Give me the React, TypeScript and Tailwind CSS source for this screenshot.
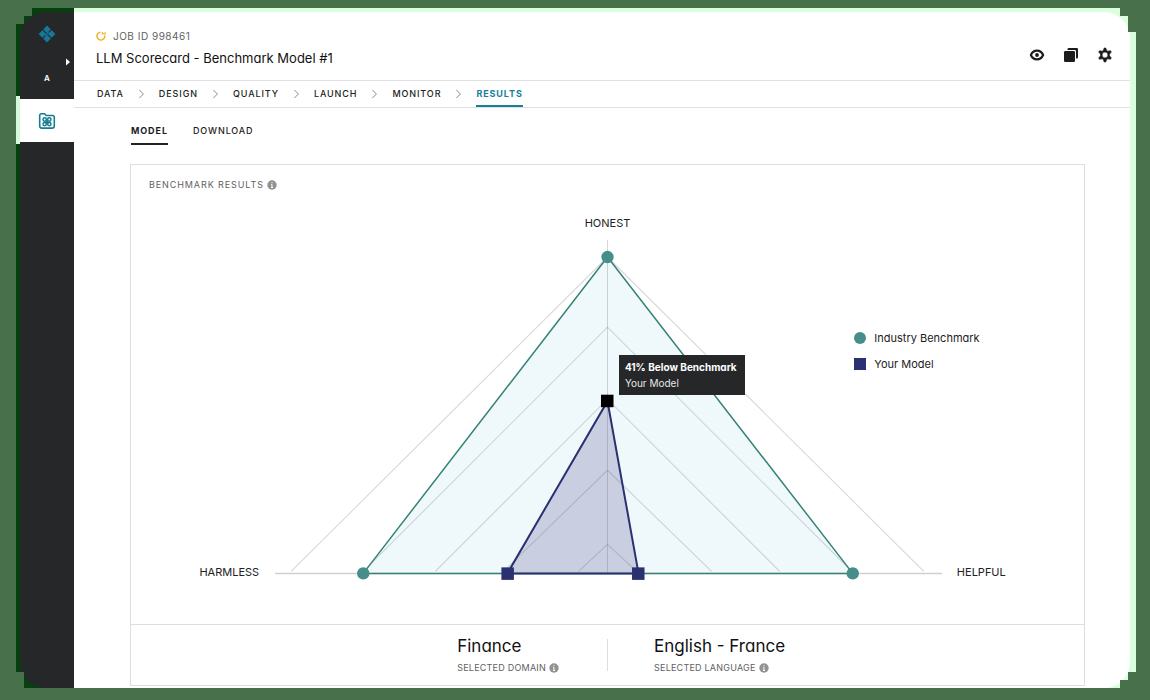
import type { ReactNode } from "react";

const steps = ["DATA", "DESIGN", "QUALITY", "LAUNCH", "MONITOR", "RESULTS"];

/* Half base width and peak height of each level of the radar grid. */
const gridLevels = [
  { half: 316, peak: 316 },
  { half: 244, peak: 246 },
  { half: 172, peak: 174 },
  { half: 104, peak: 103 },
  { half: 29, peak: 29 },
];

function LogoIcon() {
  return (
    <svg width="18" height="18" viewBox="0 0 18 18" aria-hidden="true">
      <g fill="#17789a">
        <path d="M9 0.6 12.8 4.4 9 8.2 5.2 4.4Z" />
        <path d="M4.4 5.2 8.2 9 4.4 12.8 0.6 9Z" />
        <path d="M13.6 5.2 17.4 9 13.6 12.8 9.8 9Z" />
        <path d="M9 9.8 12.8 13.6 9 17.4 5.2 13.6Z" />
      </g>
      <path d="M7.4 10.6 10.6 7.4" stroke="#17789a" strokeWidth="1.2" />
    </svg>
  );
}

function ProjectsIcon() {
  return (
    <svg width="18" height="18" viewBox="0 0 18 18" fill="none" stroke="#147d91" aria-hidden="true">
      <path
        d="M1.7 3.4A1.6 1.6 0 0 1 3.3 1.8h3.2l1.7 1.7h6.5a1.6 1.6 0 0 1 1.6 1.6v9a2 2 0 0 1-2 2H3.7a2 2 0 0 1-2-2Z"
        strokeWidth="1.6"
        strokeLinejoin="round"
      />
      <g strokeWidth="1.5">
        <circle cx="6.7" cy="7.5" r="1.7" />
        <circle cx="11.3" cy="7.5" r="1.7" />
        <circle cx="6.7" cy="12.1" r="1.7" />
        <circle cx="11.3" cy="12.1" r="1.7" />
        <path d="m7.9 8.7 2.2 2.2M10.1 8.7l-2.2 2.2" />
      </g>
    </svg>
  );
}

function StatusIcon() {
  return (
    <svg width="10" height="10" viewBox="0 0 10 10" fill="none" stroke="#f5b52e" strokeWidth="1.6" aria-hidden="true">
      <path d="M4.6 1.2A3.9 3.9 0 1 0 8.7 4.3" />
      <path d="M6.4 3.4V.9M6.4 2.8H9.2V1.2" strokeWidth="1.2" />
    </svg>
  );
}

function EyeIcon() {
  return (
    <svg width="16" height="16" viewBox="0 0 16 16" aria-hidden="true">
      <path
        d="M1.9 8C3.2 5 5.4 3.6 8 3.6S12.8 5 14.1 8c-1.3 3-3.5 4.4-6.1 4.4S3.2 11 1.9 8Z"
        fill="none"
        stroke="#1b1c1d"
        strokeWidth="2.2"
        strokeLinejoin="round"
      />
      <circle cx="8" cy="8" r="1.9" fill="#1b1c1d" />
    </svg>
  );
}

function CopyIcon() {
  return (
    <svg width="16" height="16" viewBox="0 0 16 16" aria-hidden="true">
      <path d="M4.5 3V2.2A1.2 1.2 0 0 1 5.7 1H13.8A1.2 1.2 0 0 1 15 2.2V10.3A1.2 1.2 0 0 1 13.8 11.5H13V4.3A1.3 1.3 0 0 0 11.7 3Z" fill="#1b1c1d" />
      <rect x="1" y="4" width="11" height="11" rx="1.2" fill="#1b1c1d" />
    </svg>
  );
}

function GearIcon() {
  return (
    <svg width="16" height="16" viewBox="0 0 16 16" aria-hidden="true">
      <path
        fill="#1b1c1d"
        stroke="#1b1c1d"
        strokeWidth="0.6"
        strokeLinejoin="round"
        fillRule="evenodd"
        d="M7.2 1h1.6l.9 2.5 1.1.7 2.7-.5.8 1.4L12.5 7.2v1.6l1.8 2.1-.8 1.4-2.7-.5-1.1.7L8.8 15H7.2l-.9-2.5-1.1-.7-2.7.5-.8-1.4L3.5 8.8V7.2L1.7 5.1l.8-1.4 2.7.5 1.1-.7ZM8 5.1a2.9 2.9 0 1 0 0 5.8 2.9 2.9 0 1 0 0-5.8Z"
      />
    </svg>
  );
}

function InfoIcon() {
  return (
    <svg className="block" width="10" height="10" viewBox="0 0 10 10" aria-hidden="true">
      <circle cx="5" cy="5" r="4.7" fill="#929292" />
      <path d="M5 2.2v1.1M4.2 4.5H5v3M4 7.5h2" stroke="#fff" strokeWidth="1" fill="none" />
    </svg>
  );
}

function Caption({ children, label }: { children: ReactNode; label: string }) {
  return (
    <div className="flex items-center gap-[3px] text-[9px] leading-3 text-[#626262]">
      {children}
      <button type="button" aria-label={label}>
        <InfoIcon />
      </button>
    </div>
  );
}

function Sidebar() {
  return (
    <aside className="flex w-[54px] shrink-0 flex-col bg-[#262729] rounded-l-[26px]">
      <div className="flex h-[87px] flex-col items-center pt-[13px]">
        <a href="#home" aria-label="Home">
          <LogoIcon />
        </a>
        <button type="button" aria-label="Expand menu" className="mt-[15px] mr-1 self-end">
          <svg className="block" width="4" height="8" viewBox="0 0 4 8" aria-hidden="true">
            <path d="M0 .5l4 3.5-4 3.5Z" fill="#fff" />
          </svg>
        </button>
        <span className="mt-1.5 text-[8px] leading-3 font-semibold text-white">A</span>
      </div>
      <a href="#projects" aria-label="Projects" className="flex h-[43px] items-center justify-center bg-white">
        <ProjectsIcon />
      </a>
    </aside>
  );
}

function Header() {
  return (
    <header className="flex h-[69px] items-center justify-between border-b border-[#dfe0e3] pr-[17px] pl-[22px]">
      <div className="pt-1.5">
        <p className="flex items-center gap-[7px] text-[10px] leading-3 tracking-wider text-[#626262]">
          <StatusIcon />
          JOB ID 998461
        </p>
        <h1 className="mt-1.5 text-[13px] leading-5 text-[#111]">LLM Scorecard - Benchmark Model #1</h1>
      </div>
      <div className="mt-[18px] flex gap-[18px]">
        <button type="button" aria-label="Preview">
          <EyeIcon />
        </button>
        <button type="button" aria-label="Copy">
          <CopyIcon />
        </button>
        <button type="button" aria-label="Settings">
          <GearIcon />
        </button>
      </div>
    </header>
  );
}

function StepNav() {
  return (
    <nav aria-label="Steps" className="border-b border-[#dfe0e3] pl-[23px]">
      <ol className="flex h-[26px] text-[9px] font-medium tracking-widest">
        {steps.map((step, i) => (
          <li key={step} className="flex items-center">
            {i > 0 && (
              <svg className="mx-[15px]" width="5" height="10" viewBox="0 0 5 10" fill="none" stroke="#8b8b8b" aria-hidden="true">
                <path d="M.4 1l4 4-4 4" />
              </svg>
            )}
            <a
              href={"#" + step.toLowerCase()}
              aria-current={step === "RESULTS" ? "step" : undefined}
              className={
                step === "RESULTS"
                  ? "flex h-full items-center border-b-2 border-[#16809a] pt-0.5 font-bold text-[#16809a]"
                  : "flex h-full items-center border-b-2 border-transparent pt-0.5 text-[#222]"
              }
            >
              {step}
            </a>
          </li>
        ))}
      </ol>
    </nav>
  );
}

function RadarChart() {
  return (
    <div className="relative">
      <svg viewBox="0 0 952 428" className="block w-full" role="img" aria-label="Benchmark results for honest, helpful and harmless">
        <g transform="translate(476 377)">
          <path d="M0-316 245 0H-244Z" fill="#eff9fc" />
          <path d="M0-172 31 0H-100Z" fill="#c9cfe0" />
          <g fill="none" stroke="#5a5a60" strokeOpacity="0.25">
            {gridLevels.map(({ half, peak }) => (
              <path key={peak} d={`M${-half}-2L0-${peak}L${half}-2`} />
            ))}
            <path d="M0-333V0" />
          </g>
          <path d="M-332 0H334" stroke="#cfcfcf" strokeWidth="1.5" />
          <path d="M0-316 245 0H-244Z" fill="none" stroke="#358374" strokeWidth="1.5" />
          <path d="M0-172 31 0H-100Z" fill="none" stroke="#2b3071" strokeWidth="2" />
          <g fill="#468e89">
            <circle cx="0" cy="-316" r="6.2" />
            <circle cx="-244" cy="0" r="6.2" />
            <circle cx="245" cy="0" r="6.2" />
          </g>
          <rect x="-106" y="-6" width="12.5" height="12.5" fill="#2b3071" />
          <rect x="24.5" y="-6" width="12.5" height="12.5" fill="#2b3071" />
          <rect x="-6.5" y="-178.500" width="12.5" height="12.5" fill="#000" />
          <g fill="#222" fontSize="11">
            <text y="-346" textAnchor="middle">HONEST</text>
            <text x="-348" y="3" textAnchor="end">HARMLESS</text>
            <text x="349" y="3">HELPFUL</text>
          </g>
        </g>
      </svg>
      <div
        role="tooltip"
        className="absolute top-[37%] left-[51.2%] bg-[#262729] py-1 pr-2 pl-1.5 text-[10px] leading-4 whitespace-nowrap text-[#e6e6e6]"
      >
        <p className="font-bold text-white">41% Below Benchmark</p>
        <p>Your Model</p>
      </div>
      <ul className="absolute top-[31.2%] left-[75.9%] flex flex-col gap-2.5 text-[11px] leading-4 text-[#1c1c1c]">
        <li className="flex items-center gap-2">
          <span className="size-3 rounded-full bg-[#468e89]" />
          Industry Benchmark
        </li>
        <li className="flex items-center gap-2">
          <span className="size-3 bg-[#2b3071]" />
          Your Model
        </li>
      </ul>
    </div>
  );
}

export default function App() {
  return (
    <div className="flex min-h-screen bg-[#48704b] pt-2 pr-[14px] pb-3 pl-4 font-[Inter,sans-serif] [font-feature-settings:'cv11']">
      <div className="flex grow bg-[linear-gradient(#d5fadb,#d5fadb),linear-gradient(to_right,#06400f_58px,#d9ffdf_58px)] bg-[length:4px_48px,auto] bg-[position:0_88px,0_0] bg-no-repeat pt-1 pr-1.5 pl-1 [clip-path:polygon(16px_0,calc(100%_-_16px)_0,calc(100%_-_16px)_8px,calc(100%_-_8px)_8px,calc(100%_-_8px)_24px,100%_24px,100%_calc(100%_-_16px),calc(100%_-_8px)_calc(100%_-_16px),calc(100%_-_8px)_calc(100%_-_8px),calc(100%_-_16px)_calc(100%_-_8px),calc(100%_-_16px)_100%,8px_100%,8px_calc(100%_-_16px),0_calc(100%_-_16px),0_16px,8px_16px,8px_8px,16px_8px)]">
        <Sidebar />
        <div className="min-w-0 grow rounded-r-[26px] bg-white">
          <Header />
          <StepNav />
          <main className="pt-[17px] pr-[45px] pl-14">
            <nav aria-label="Result views" className="flex gap-[25px] pl-px text-[9px] leading-3 font-medium tracking-widest">
              <a href="#model" aria-current="page" className="border-b-2 border-[#222] pb-1.5 font-bold text-[#1c1c1c]">
                MODEL
              </a>
              <a href="#download" className="text-[#222]">
                DOWNLOAD
              </a>
            </nav>
            <section className="mt-[19px] border border-[#dedede]">
              <div className="px-[18px] pt-[14px] pb-[5px]">
                <Caption label="About benchmark results">
                  <h2 className="tracking-widest">BENCHMARK RESULTS</h2>
                </Caption>
              </div>
              <RadarChart />
              <footer className="grid h-[61px] grid-cols-[1fr_1px_1fr] border-t border-[#dedede] pt-[11px]">
                <div className="flex justify-end pr-12">
                  <div>
                    <p className="mb-1.5 text-[17px] leading-5 text-[#111]">Finance</p>
                    <Caption label="About selected domain">
                      <span className="tracking-wide">SELECTED DOMAIN</span>
                    </Caption>
                  </div>
                </div>
                <div className="mt-[3px] h-8 bg-[#dedede]" />
                <div className="pl-[46px]">
                  <p className="mb-1.5 text-[17px] leading-5 text-[#111]">English - France</p>
                  <Caption label="About selected language">
                    <span className="tracking-wide">SELECTED LANGUAGE</span>
                  </Caption>
                </div>
              </footer>
            </section>
          </main>
        </div>
      </div>
    </div>
  );
}
